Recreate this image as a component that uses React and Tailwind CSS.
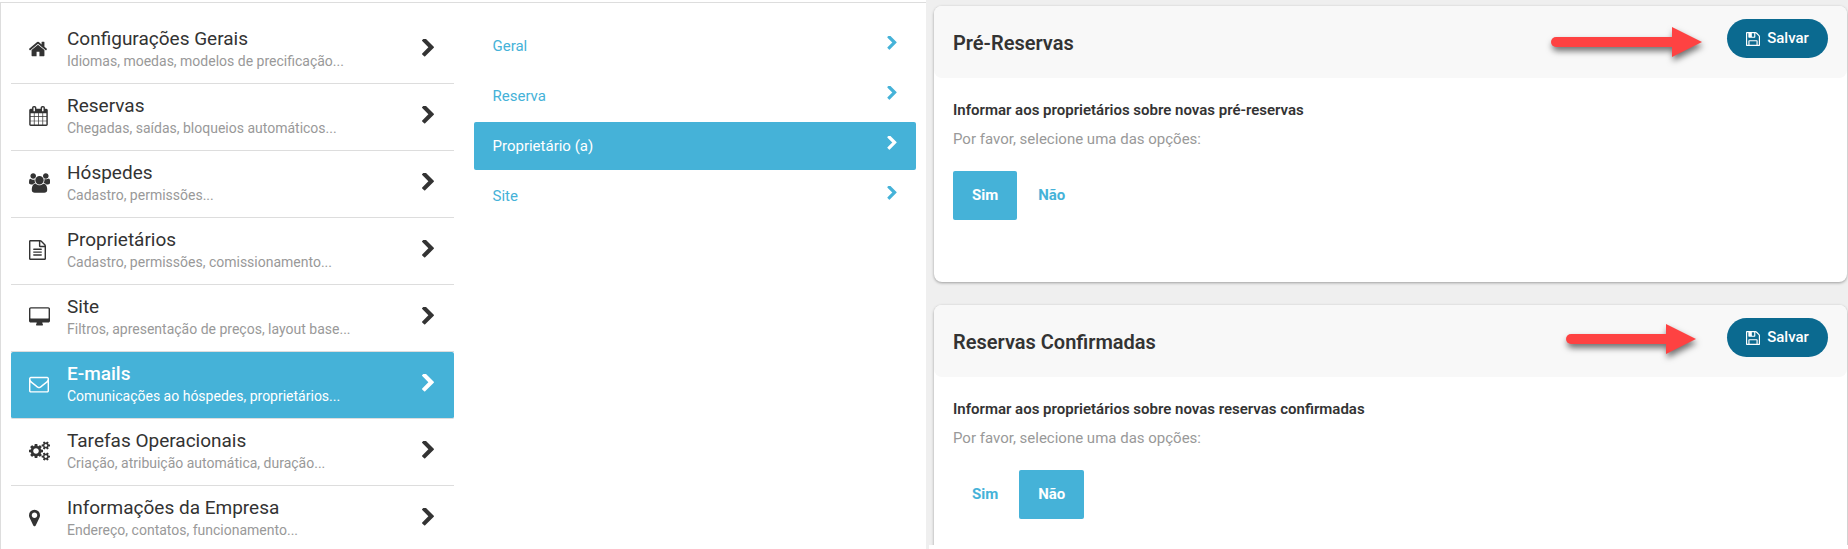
import { useState } from "react";
import clsx from "clsx";

const ICONS = {
  home: {
    box: "90 0 1612 1792",
    size: "w-[18px] h-5",
    d: "M1472 992v480q0 26-19 45t-45 19h-384v-384h-256v384h-384q-26 0-45-19t-19-45v-480q0-1 .5-3t.5-3l575-474 575 474q1 2 1 6zm223-69l-62 74q-8 9-21 11h-3q-13 0-21-7l-692-577-692 577q-12 8-24 7-13-2-21-11l-62-74q-8-10-7-23.5t11-21.5l719-599q32-26 76-26t76 26l244 204v-195q0-14 9-23t23-9h192q14 0 23 9t9 23v408l219 182q10 8 11 21.5t-7 23.5z",
  },
  calendar: {
    box: "64 0 1664 1792",
    size: "w-[19px] h-5",
    d: "M192 1664h288v-288h-288v288zm352 0h320v-288h-320v288zm-352-352h288v-320h-288v320zm352 0h320v-320h-320v320zm-352-384h288v-288h-288v288zm736 736h320v-288h-320v288zm-384-736h320v-288h-320v288zm768 736h288v-288h-288v288zm-384-352h320v-320h-320v320zm-352-864v-288q0-13-9.5-22.5t-22.5-9.5h-64q-13 0-22.5 9.5t-9.5 22.5v288q0 13 9.5 22.5t22.5 9.5h64q13 0 22.5-9.5t9.5-22.5zm736 864h288v-320h-288v320zm-384-384h320v-288h-320v288zm384 0h288v-288h-288v288zm32-480v-288q0-13-9.5-22.5t-22.5-9.5h-64q-13 0-22.5 9.5t-9.5 22.5v288q0 13 9.5 22.5t22.5 9.5h64q13 0 22.5-9.5t9.5-22.5zm384-64v1280q0 52-38 90t-90 38h-1408q-52 0-90-38t-38-90v-1280q0-52 38-90t90-38h128v-96q0-66 47-113t113-47h64q66 0 113 47t47 113v96h384v-96q0-66 47-113t113-47h64q66 0 113 47t47 113v96h128q52 0 90 38t38 90z",
  },
  users: {
    box: "0 0 1920 1792",
    size: "w-[21px] h-5",
    d: "M593 896q-162 5-265 128h-134q-82 0-138-40.5t-56-118.5q0-353 124-353 6 0 43.5 21t97.5 42.5 119 21.5q67 0 133-23-5 37-5 66 0 159 93 293zm1071 637q0 120-73 189.5t-194 69.5h-874q-121 0-194-69.5t-73-189.5q0-53 3.5-103.5t14-109 26.5-108.5 43-97.5 62-81 85.5-53.5 111.5-20q10 0 43 21.5t73 48 107 48 135 21.5 135-21.5 107-48 73-48 43-21.5q61 0 111.5 20t85.5 53.5 62 81 43 97.5 26.5 108.5 14 109 3.5 103.5zm-1024-1277q0 106-75 181t-181 75-181-75-75-181 75-181 181-75 181 75 75 181zm704 384q0 159-112.5 271.5t-271.5 112.5-271.5-112.5-112.5-271.5 112.5-271.5 271.5-112.5 271.5 112.5 112.5 271.5zm576 225q0 78-56 118.5t-138 40.5h-134q-103-123-265-128 93-134 93-293 0-29-5-66 66 23 133 23 59 0 119-21.5t97.5-42.5 43.5-21q124 0 124 353zm-128-609q0 106-75 181t-181 75-181-75-75-181 75-181 181-75 181 75 75 181z",
  },
  file: {
    box: "128 0 1536 1792",
    size: "w-[17px] h-5",
    d: "M1596 380q28 28 48 76t20 88v1152q0 40-28 68t-68 28h-1344q-40 0-68-28t-28-68v-1600q0-40 28-68t68-28h896q40 0 88 20t76 48zm-444-244v376h376q-10-29-22-41l-313-313q-12-12-41-22zm384 1528v-1024h-416q-40 0-68-28t-28-68v-416h-768v1536h1280zm-1024-864q0-14 9-23t23-9h704q14 0 23 9t9 23v64q0 14-9 23t-23 9h-704q-14 0-23-9t-9-23v-64zm736 224q14 0 23 9t9 23v64q0 14-9 23t-23 9h-704q-14 0-23-9t-9-23v-64q0-14 9-23t23-9h704zm0 256q14 0 23 9t9 23v64q0 14-9 23t-23 9h-704q-14 0-23-9t-9-23v-64q0-14 9-23t23-9h704z",
  },
  desktop: {
    box: "-64 0 1920 1792",
    size: "w-[21px] h-5",
    d: "M1728 992v-832q0-13-9.5-22.5t-22.5-9.5h-1600q-13 0-22.5 9.5t-9.5 22.5v832q0 13 9.5 22.5t22.5 9.5h1600q13 0 22.5-9.5t9.5-22.5zm128-832v1088q0 66-47 113t-113 47h-544q0 37 16 77.5t32 71 16 43.5q0 26-19 45t-45 19h-512q-26 0-45-19t-19-45q0-14 16-44t32-70 16-78h-544q-66 0-113-47t-47-113v-1088q0-66 47-113t113-47h1600q66 0 113 47t47 113z",
  },
  envelope: {
    box: "0 0 1792 1792",
    size: "w-5 h-5",
    d: "M1664 1504v-768q-32 36-69 66-268 206-426 338-51 43-83 67t-86.5 48.5-102.5 24.5h-2q-48 0-102.5-24.5t-86.5-48.5-83-67q-158-132-426-338-37-30-69-66v768q0 13 9.5 22.5t22.5 9.5h1472q13 0 22.5-9.5t9.5-22.5zm0-1051v-24.5l-.5-13-3-12.5-5.5-9-9-7.5-14-2.5h-1472q-13 0-22.5 9.5t-9.5 22.5q0 168 147 284 193 152 401 317 6 5 35 29.5t46 37.5 44.5 31.5 50.5 27.5 43 9h2q20 0 43-9t50.5-27.5 44.5-31.5 46-37.5 35-29.5q208-165 401-317 54-43 100.5-115.5t46.5-131.5zm128-37v1088q0 66-47 113t-113 47h-1472q-66 0-113-47t-47-113v-1088q0-66 47-113t113-47h1472q66 0 113 47t47 113z",
  },
  cogs: {
    box: "0 0 1920 1792",
    size: "w-[21px] h-5",
    d: "M896 896q0-106-75-181t-181-75-181 75-75 181 75 181 181 75 181-75 75-181zm768 512q0-52-38-90t-90-38-90 38-38 90q0 53 37.5 90.5t90.5 37.5 90.5-37.5 37.5-90.5zm0-1024q0-52-38-90t-90-38-90 38-38 90q0 53 37.5 90.5t90.5 37.5 90.5-37.5 37.5-90.5zm-384 421v185q0 10-7 19.5t-16 10.5l-155 24q-11 35-32 76 34 48 90 115 7 11 7 20 0 12-7 19-23 30-82.5 89.5t-78.5 59.5q-11 0-21-7l-115-90q-37 19-77 31-11 108-23 155-7 24-30 24h-186q-11 0-20-7.5t-10-17.5l-23-153q-34-10-75-31l-118 89q-7 7-20 7-11 0-21-8-144-133-144-160 0-9 7-19 10-14 41-53t47-61q-23-44-35-82l-152-24q-10-1-17-9.5t-7-19.5v-185q0-10 7-19.5t16-10.5l155-24q11-35 32-76-34-48-90-115-7-11-7-20 0-12 7-20 22-30 82-89t79-59q11 0 21 7l115 90q34-18 77-32 11-108 23-154 7-24 30-24h186q11 0 20 7.5t10 17.5l23 153q34 10 75 31l118-89q8-7 20-7 11 0 21 8 144 133 144 160 0 8-7 19-12 16-42 54t-45 60q23 48 34 82l152 23q10 2 17 10.5t7 19.5zm640 533v140q0 16-149 31-12 27-30 52 51 113 51 138 0 4-4 7-122 71-124 71-8 0-46-47t-52-68q-20 2-30 2t-30-2q-14 21-52 68t-46 47q-2 0-124-71-4-3-4-7 0-25 51-138-18-25-30-52-149-15-149-31v-140q0-16 149-31 13-29 30-52-51-113-51-138 0-4 4-7 4-2 35-20t59-34 30-16q8 0 46 46.5t52 67.5q20-2 30-2t30 2q51-71 92-112l6-2q4 0 124 70 4 3 4 7 0 25-51 138 17 23 30 52 149 15 149 31zm0-1024v140q0 16-149 31-12 27-30 52 51 113 51 138 0 4-4 7-122 71-124 71-8 0-46-47t-52-68q-20 2-30 2t-30-2q-14 21-52 68t-46 47q-2 0-124-71-4-3-4-7 0-25 51-138-18-25-30-52-149-15-149-31v-140q0-16 149-31 13-29 30-52-51-113-51-138 0-4 4-7 4-2 35-20t59-34 30-16q8 0 46 46.5t52 67.5q20-2 30-2t30 2q51-71 92-112l6-2q4 0 124 70 4 3 4 7 0 25-51 138 17 23 30 52 149 15 149 31z",
  },
  marker: {
    box: "384 0 1024 1792",
    size: "w-[11px] h-5",
    d: "M1152 640q0-106-75-181t-181-75-181 75-75 181 75 181 181 75 181-75 75-181zm256 0q0 109-33 179l-364 774q-16 33-47.5 52t-67.5 19-67.5-19-46.5-52l-365-774q-33-70-33-179 0-212 150-362t362-150 362 150 150 362z",
  },
  save: {
    box: "128 128 1536 1536",
    size: "w-[14px] h-[14px]",
    d: "M512 1536h768v-384h-768v384zm896 0h128v-896q0-14-10-38.5t-20-34.5l-281-281q-10-10-34-20t-39-10v416q0 40-28 68t-68 28h-576q-40 0-68-28t-28-68v-416h-128v1280h128v-416q0-40 28-68t68-28h832q40 0 68 28t28 68v416zm-384-928v-320q0-13-9.5-22.5t-22.5-9.5h-192q-13 0-22.5 9.5t-9.5 22.5v320q0 13 9.5 22.5t22.5 9.5h192q13 0 22.5-9.5t9.5-22.5zm640 32v928q0 40-28 68t-68 28h-1344q-40 0-68-28t-28-68v-1344q0-40 28-68t68-28h928q40 0 88 20t76 48l280 280q28 28 48 76t20 88z",
  },
};

const menu = [
  { icon: "home", title: "Configurações Gerais", text: "Idiomas, moedas, modelos de precificação..." },
  { icon: "calendar", title: "Reservas", text: "Chegadas, saídas, bloqueios automáticos..." },
  { icon: "users", title: "Hóspedes", text: "Cadastro, permissões..." },
  { icon: "file", title: "Proprietários", text: "Cadastro, permissões, comissionamento..." },
  { icon: "desktop", title: "Site", text: "Filtros, apresentação de preços, layout base..." },
  { icon: "envelope", title: "E-mails", text: "Comunicações ao hóspedes, proprietários...", active: true },
  { icon: "cogs", title: "Tarefas Operacionais", text: "Criação, atribuição automática, duração..." },
  { icon: "marker", title: "Informações da Empresa", text: "Endereço, contatos, funcionamento..." },
];

const submenu = [
  { title: "Geral" },
  { title: "Reserva" },
  { title: "Proprietário (a)", active: true },
  { title: "Site" },
];

function Icon({ name }) {
  const icon = ICONS[name];

  return (
    <svg viewBox={icon.box} className={clsx("shrink-0", icon.size)} fill="currentColor" aria-hidden="true">
      <path d={icon.d} />
    </svg>
  );
}

function Chevron({ className }) {
  return (
    <svg viewBox="346 118 1036 1556" className={clsx("shrink-0", className)} fill="currentColor" aria-hidden="true">
      <path d="M1363 877l-742 742q-19 19-45 19t-45-19l-166-166q-19-19-19-45t19-45l531-531-531-531q-19-19-19-45t19-45l166-166q19-19 45-19t45 19l742 742q19 19 19 45t-19 45z" />
    </svg>
  );
}

function MenuItem({ item }) {
  return (
    <a
      href="#"
      className={clsx(
        "flex items-center h-[67px] pl-[18px] pr-5 border-b border-[#ddd]",
        item.active ? "bg-[#45b2d8] text-white rounded-xs" : "text-[#333]"
      )}
    >
      <span className="w-[38px] shrink-0 pb-[2px]">
        <Icon name={item.icon} />
      </span>
      <span className="flex-1 min-w-0 pb-[2px]">
        <span className={clsx("block text-[19px] leading-6", item.active && "font-medium")}>{item.title}</span>
        <span className={clsx("block text-sm leading-5", item.active ? "text-white" : "text-[#999]")}>
          {item.text}
        </span>
      </span>
      <Chevron className="w-3 h-[18px] mb-1" />
    </a>
  );
}

function SubmenuItem({ item }) {
  return (
    <a
      href="#"
      className={clsx(
        "flex items-start justify-between h-12 px-[19px] pt-3 text-[15px] leading-6 rounded-xs",
        item.active ? "bg-[#45b2d8] text-white" : "text-[#45b2d8]"
      )}
    >
      {item.title}
      <Chevron className="w-[10px] h-[14px] mt-[2px]" />
    </a>
  );
}

// red pointer towards the save button
function Arrow({ length, className }) {
  return (
    <svg
      width={length}
      height="30"
      viewBox={`0 0 ${length} 30`}
      className={clsx("shrink-0 overflow-visible drop-shadow-[1px_4px_3px_rgba(0,0,0,0.55)]", className)}
      aria-hidden="true"
    >
      <path d={`M5 15H${length - 28}`} stroke="#fe4242" strokeWidth="10" strokeLinecap="round" />
      <path d={`M${length - 30} 0L${length} 15L${length - 30} 30z`} fill="#fe4242" />
    </svg>
  );
}

function Card({ title, question, initial, arrow }) {
  const [value, setValue] = useState(initial);

  return (
    <section className="h-[276px] shrink-0 bg-white rounded-lg shadow-[0_1px_3px_rgba(0,0,0,0.35)]">
      <header className="flex items-start h-[72px] pl-[19px] pr-[19px] bg-[#f8f8f8] rounded-lg">
        <h2 className="flex-1 pt-[25px] text-xl leading-6 font-semibold text-[#333]">{title}</h2>
        {arrow}
        <button
          type="button"
          className="flex items-center justify-center gap-[7px] h-[39px] w-[101px] mt-[13px] rounded-full bg-[#0b6a90] text-white text-[15px] font-medium"
        >
          <Icon name="save" />
          Salvar
        </button>
      </header>

      <div className="px-[19px] pt-5">
        <h3 className="text-[15px] leading-6 font-semibold text-[#333]">{question}</h3>
        <p className="pt-[5px] text-[15px] leading-6 text-[#999]">Por favor, selecione uma das opções:</p>
        <div className="flex gap-[2px] pt-5">
          {["Sim", "Não"].map((option) => (
            <button
              key={option}
              type="button"
              aria-pressed={value === option}
              onClick={() => setValue(option)}
              className={clsx(
                "h-[49px] px-[19px] rounded-xs text-[15px] font-bold",
                value === option ? "bg-[#45b2d8] text-white" : "text-[#45b2d8]"
              )}
            >
              {option}
            </button>
          ))}
        </div>
      </div>
    </section>
  );
}

export default function App() {
  return (
    <div className="grid grid-cols-[minmax(0,926fr)_minmax(0,922fr)] h-screen overflow-hidden bg-white font-['Roboto',sans-serif]">
      <div className="pt-[2px] min-h-0">
        {/* Settings menus */}
        <div className="grid grid-cols-2 gap-5 h-full px-[10px] border-t border-l border-[#ddd]">
          <nav className="pt-[14px]">
            {menu.map((item) => (
              <MenuItem key={item.title} item={item} />
            ))}
          </nav>
          <nav className="flex flex-col gap-[2px] pt-[19px]">
            {submenu.map((item) => (
              <SubmenuItem key={item.title} item={item} />
            ))}
          </nav>
        </div>
      </div>

      {/* Options */}
      <main className="min-h-0 pb-1 border-l-3 border-[#efefef]">
        <div className="flex flex-col gap-[23px] h-full overflow-hidden pt-[6px] pl-[5px] pr-px bg-[#efefef]">
          <Card
            title="Pré-Reservas"
            question="Informar aos proprietários sobre novas pré-reservas"
            initial="Sim"
            arrow={<Arrow length={151} className="mt-[21px] mr-[25px]" />}
          />
          <Card
            title="Reservas Confirmadas"
            question="Informar aos proprietários sobre novas reservas confirmadas"
            initial="Não"
            arrow={<Arrow length={130} className="mt-[19px] mr-[31px]" />}
          />
        </div>
      </main>
    </div>
  );
}
